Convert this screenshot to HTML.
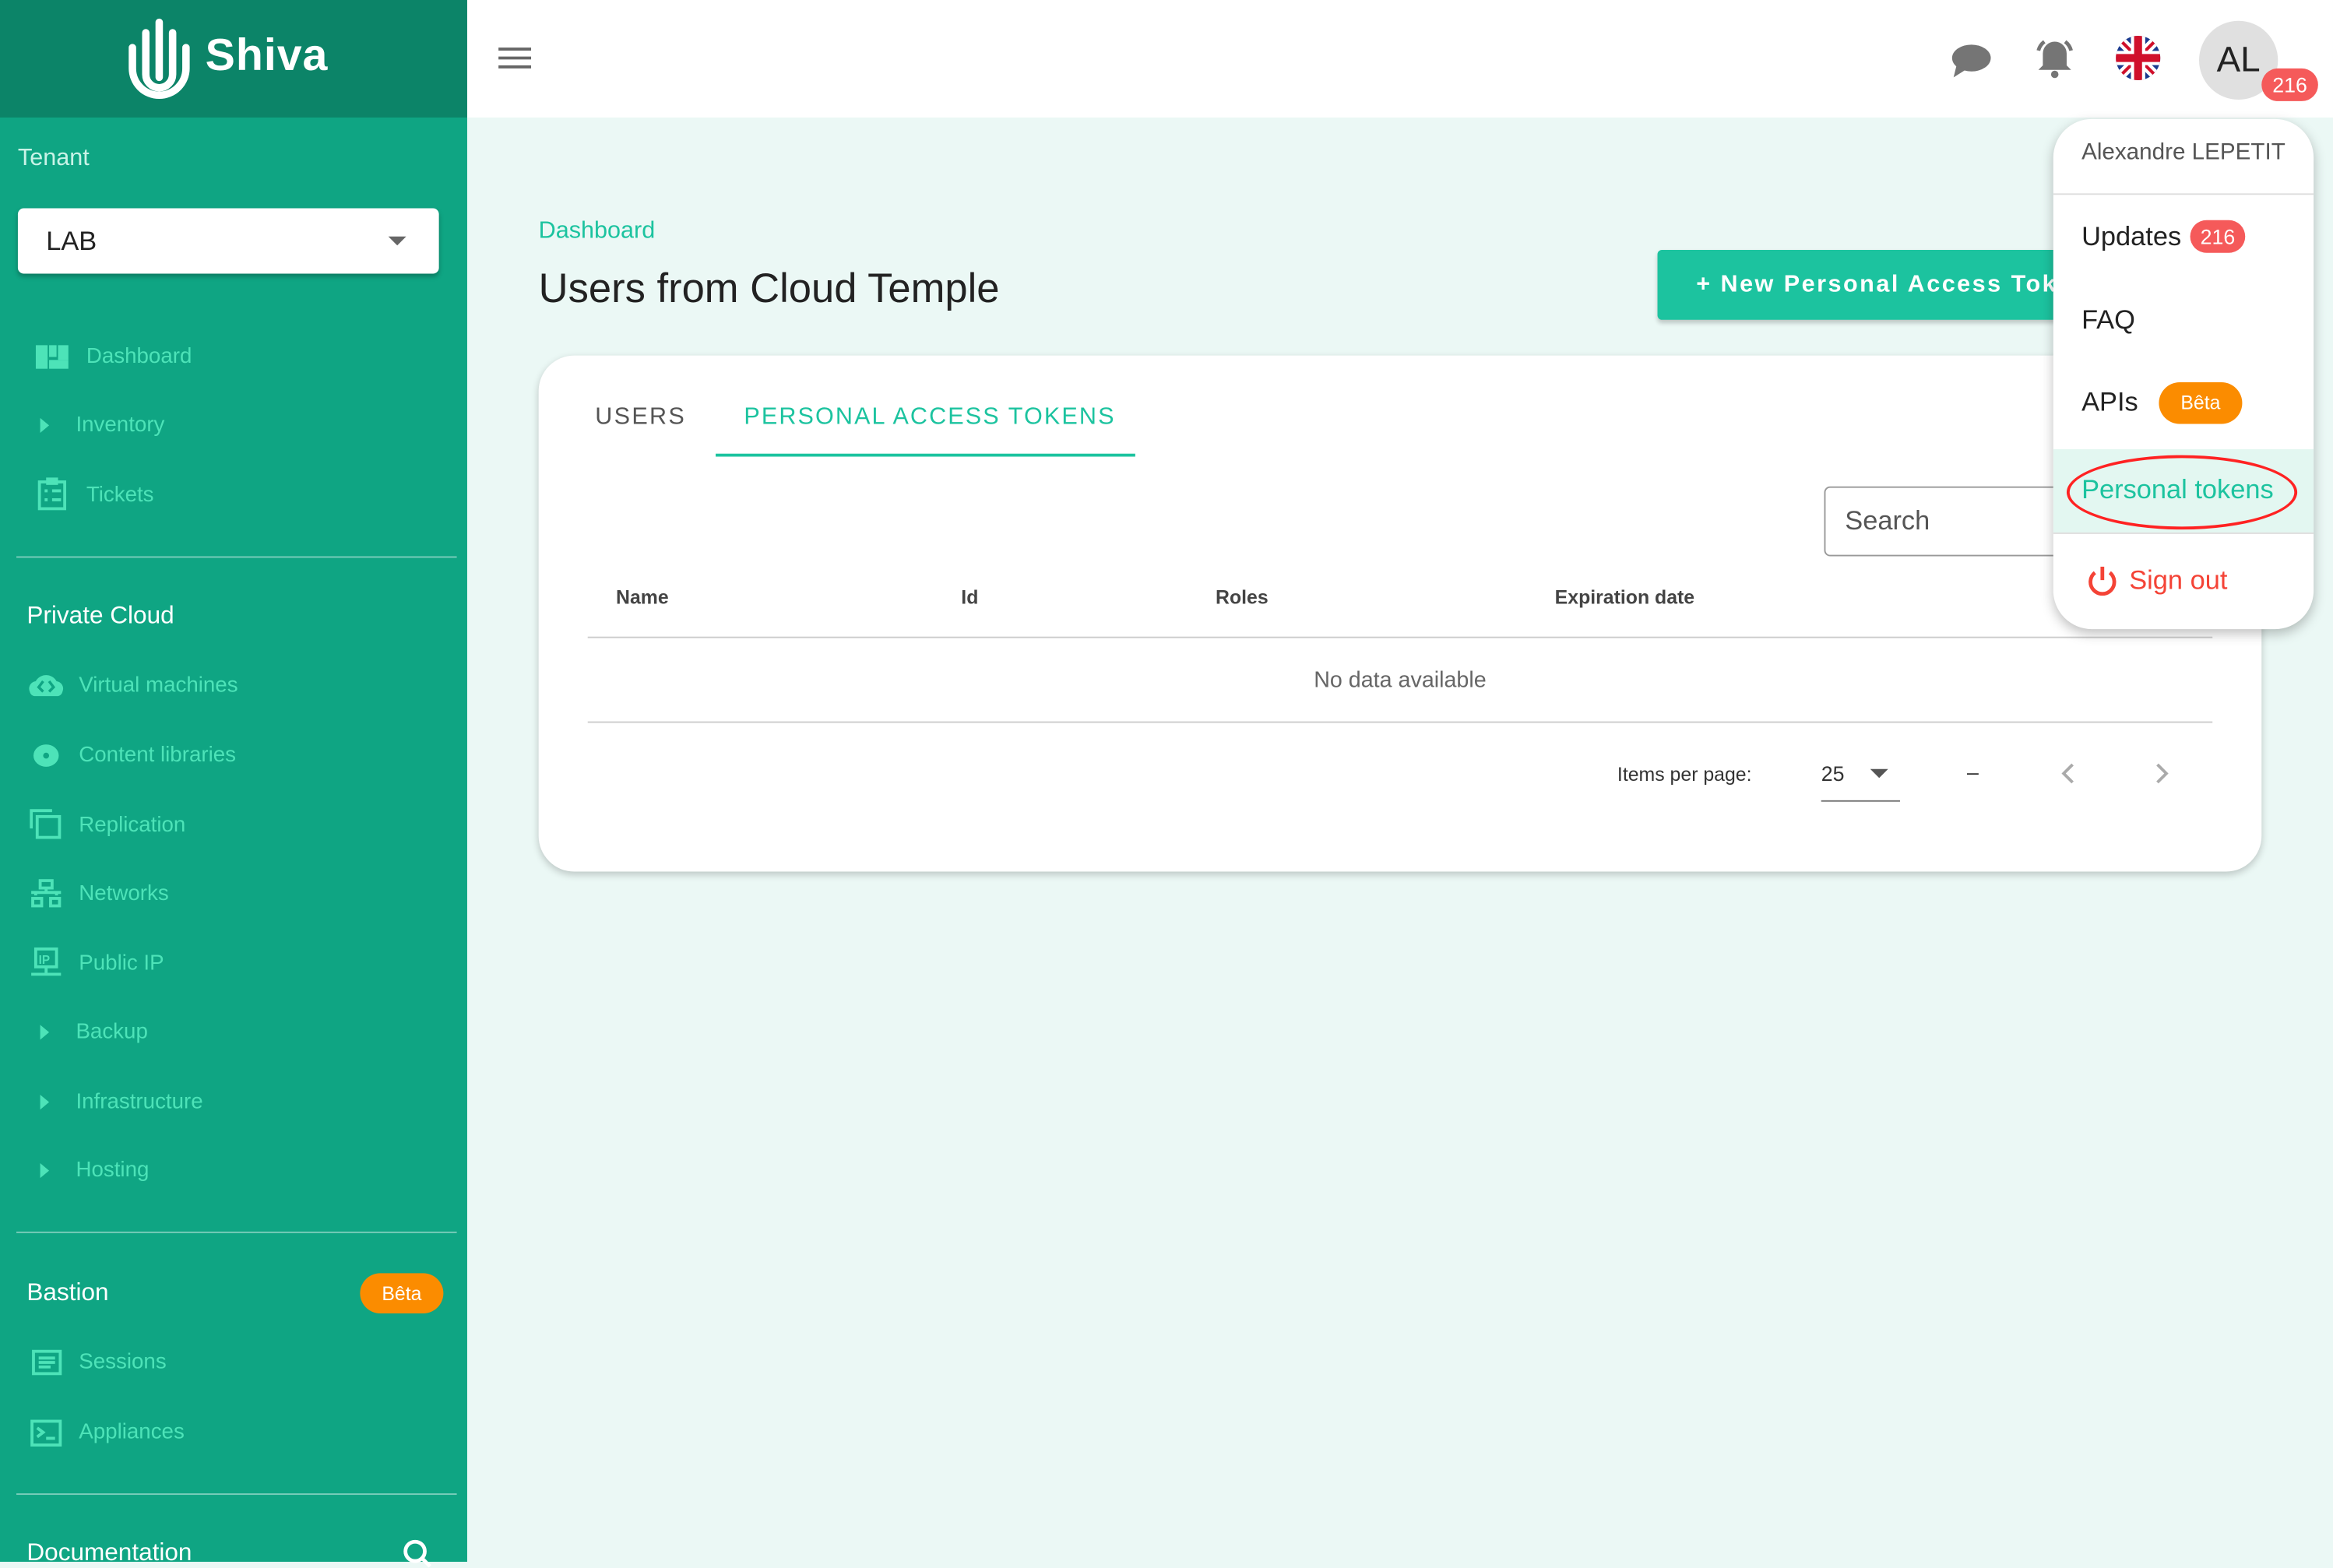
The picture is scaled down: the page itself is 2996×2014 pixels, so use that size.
<!DOCTYPE html>
<html><head><meta charset="utf-8"><style>
*{box-sizing:border-box;margin:0;padding:0}
html,body{width:2996px;height:2006px;overflow:hidden;background:#ebf8f5;font-family:"Liberation Sans",sans-serif}
#s{position:absolute;left:0;top:0;width:1568px;height:1050px;transform:scale(1.9107,1.9105);transform-origin:0 0;background:#ebf8f5}
.a{position:absolute}
.side{left:0;top:0;width:314px;height:1050px;background:#0fa583}
.hdr{left:0;top:0;width:314px;height:79px;background:#0c8468}
.mi{position:absolute;left:0;color:#4de3b8;font-size:14.5px;height:20px;width:300px}
.mi svg{position:absolute}
.mi span{position:absolute;top:0;line-height:20px;white-space:nowrap}
.sec{position:absolute;left:18px;color:#fff;font-size:16.5px}
.hr{position:absolute;left:11px;width:296px;height:1px;background:rgba(255,255,255,.45)}
.beta{background:#fb8c00;color:#fff;border-radius:14px;font-size:13px;text-align:center}
.tri{position:absolute;left:27px;top:5px;border-top:5px solid transparent;border-bottom:5px solid transparent;border-left:6px solid #4de3b8}
</style></head><body><div id="s">
<div class="a side"></div>
<div class="a hdr"></div>
<svg class="a" style="left:85px;top:10px" width="46" height="58" viewBox="0 0 46 58"><g fill="none" stroke="#fff" stroke-width="5" stroke-linecap="round"><path d="M22 5V42"/><path d="M31 12V40a9 9 0 0 1-18 0V12"/><path d="M40 22V36a18 18 0 0 1-36 0V22"/></g></svg>
<div class="a" style="left:138px;top:21px;color:#fff;font-size:30px;font-weight:bold;letter-spacing:0.5px">Shiva</div>
<div class="a" style="left:12px;top:98px;color:#c9f3e7;font-size:16px">Tenant</div>
<div class="a" style="left:12px;top:140px;width:283px;height:44px;background:#fff;border-radius:4px;box-shadow:0 2px 3px rgba(0,0,0,.25)"></div>
<div class="a" style="left:31px;top:152px;font-size:18px;color:#222">LAB</div>
<div class="a" style="left:261px;top:159px;border-left:6px solid transparent;border-right:6px solid transparent;border-top:6px solid #666"></div>

<div class="mi" style="top:230px"><svg style="left:24px;top:2px" width="22" height="16"><rect x="0" y="0" width="8" height="16" fill="#4de3b8"/><rect x="9" y="0" width="5" height="8" fill="#4de3b8"/><rect x="15" y="0" width="7" height="10" fill="#4de3b8"/><rect x="9" y="10" width="13" height="6" fill="#4de3b8"/></svg><span style="left:58px">Dashboard</span></div>
<div class="mi" style="top:276px"><div class="tri"></div><span style="left:51px">Inventory</span></div>
<div class="mi" style="top:323px"><svg style="left:25px;top:-2px" width="22" height="24"><rect x="1.5" y="3" width="17" height="18" fill="none" stroke="#4de3b8" stroke-width="2"/><rect x="6" y="0" width="8" height="5" fill="#4de3b8"/><path d="M5 9h2M5 15h2M10 9h6M10 15h6" stroke="#4de3b8" stroke-width="2"/></svg><span style="left:58px">Tickets</span></div>
<div class="hr" style="top:374px"></div>
<div class="sec" style="top:405px">Private Cloud</div>
<div class="mi" style="top:451px"><svg style="left:18px;top:1px" width="26" height="18"><path d="M2 13a5 5 0 0 1 4-7a8 8 0 0 1 14 0a5 5 0 0 1 4 7a4 4 0 0 1-3 3H5a4 4 0 0 1-3-3z" fill="#4de3b8"/><path d="M11 6l-3 4 3 3M15 6l3 4-3 3" stroke="#0fa583" stroke-width="1.8" fill="none"/></svg><span style="left:53px">Virtual machines</span></div>
<div class="mi" style="top:498px"><svg style="left:22px;top:2px" width="18" height="16"><ellipse cx="9" cy="8" rx="8.5" ry="7.5" fill="#4de3b8"/><circle cx="9" cy="8" r="2" fill="#0fa583"/></svg><span style="left:53px">Content libraries</span></div>
<div class="mi" style="top:545px"><svg style="left:20px;top:-2px" width="22" height="22"><path d="M1 14V2h14" fill="none" stroke="#4de3b8" stroke-width="2"/><rect x="5" y="6" width="15" height="14" fill="none" stroke="#4de3b8" stroke-width="2"/></svg><span style="left:53px">Replication</span></div>
<div class="mi" style="top:591px"><svg style="left:20px;top:0" width="22" height="20"><g fill="none" stroke="#4de3b8" stroke-width="2"><rect x="7" y="1" width="8" height="5"/><path d="M11 6v3M4 11V9h14v2M1 9h20"/><rect x="2" y="13" width="6" height="5"/><rect x="14" y="13" width="6" height="5"/></g></svg><span style="left:53px">Networks</span></div>
<div class="mi" style="top:638px"><svg style="left:20px;top:-1px" width="22" height="22"><g fill="none" stroke="#4de3b8" stroke-width="2"><rect x="4" y="1" width="14" height="12"/><path d="M11 13v4M1 18h20"/></g><text x="6" y="11" font-size="8" font-weight="bold" fill="#4de3b8" font-family="Liberation Sans">IP</text></svg><span style="left:53px">Public IP</span></div>
<div class="mi" style="top:684px"><div class="tri"></div><span style="left:51px">Backup</span></div>
<div class="mi" style="top:731px"><div class="tri"></div><span style="left:51px">Infrastructure</span></div>
<div class="mi" style="top:777px"><div class="tri"></div><span style="left:51px">Hosting</span></div>
<div class="hr" style="top:828px"></div>
<div class="sec" style="top:860px">Bastion</div>
<div class="a beta" style="left:242px;top:856px;width:56px;height:27px;line-height:27px">Bêta</div>
<div class="mi" style="top:906px"><svg style="left:21px;top:1px" width="22" height="20"><g fill="none" stroke="#4de3b8" stroke-width="2"><rect x="1.5" y="1.5" width="18" height="15"/><path d="M5 6h11M5 9h11M5 12h8"/></g></svg><span style="left:53px">Sessions</span></div>
<div class="mi" style="top:953px"><svg style="left:20px;top:1px" width="22" height="20"><g fill="none" stroke="#4de3b8" stroke-width="2"><rect x="1.5" y="1.5" width="19" height="16"/><path d="M5 6l4 3-4 3M11 13h6"/></g></svg><span style="left:53px">Appliances</span></div>
<div class="hr" style="top:1004px"></div>
<div class="sec" style="top:1035px">Documentation</div>
<svg class="a" style="left:270px;top:1034px" width="20" height="20"><circle cx="9" cy="9" r="6.5" fill="none" stroke="#fff" stroke-width="2.5"/><path d="M14 14l5 5" stroke="#fff" stroke-width="2.5"/></svg>

<div class="a" style="left:314px;top:0;width:1254px;height:79px;background:#fff"></div>
<svg class="a" style="left:335px;top:31px" width="22" height="16"><path d="M0 2h22M0 8h22M0 14h22" stroke="#666" stroke-width="2"/></svg>
<svg class="a" style="left:1311px;top:27px" width="28" height="26"><ellipse cx="14" cy="12" rx="13" ry="9" fill="#757575"/><path d="M4 17l-2 8 8-5z" fill="#757575"/></svg>
<svg class="a" style="left:1366px;top:24px" width="30" height="30"><path d="M15 4a8 8 0 0 0-8 8v8l-3 3h22l-3-3v-8a8 8 0 0 0-8-8z" fill="#757575"/><circle cx="15" cy="26" r="2.5" fill="#757575"/><path d="M4 10a11 11 0 0 1 4-6M26 10a11 11 0 0 0-4-6" stroke="#757575" stroke-width="2.5" fill="none"/></svg>
<svg class="a" style="left:1421px;top:23px" width="32" height="32" viewBox="0 0 60 60"><defs><clipPath id="c"><circle cx="30" cy="30" r="28"/></clipPath></defs><g clip-path="url(#c)"><rect width="60" height="60" fill="#1a3a8f"/><path d="M0 0L60 60M60 0L0 60" stroke="#fff" stroke-width="12"/><path d="M0 0L60 60M60 0L0 60" stroke="#d0102b" stroke-width="4"/><path d="M30 0v60M0 30h60" stroke="#fff" stroke-width="18"/><path d="M30 0v60M0 30h60" stroke="#d0102b" stroke-width="10"/></g></svg>
<div class="a" style="left:1478px;top:14px;width:53px;height:53px;border-radius:50%;background:#e0e0e0;color:#222;font-size:24px;text-align:center;line-height:53px">AL</div>
<div class="a" style="left:1520px;top:46px;width:38px;height:22px;border-radius:11px;background:#f55a5a;color:#fff;font-size:14px;text-align:center;line-height:22px">216</div>

<div class="a" style="left:362px;top:147px;color:#1cc39f;font-size:16px">Dashboard</div>
<div class="a" style="left:362px;top:178px;color:#222;font-size:27.5px">Users from Cloud Temple</div>
<div class="a" style="left:1114px;top:168px;width:300px;height:47px;background:#1cc39f;border-radius:3px;box-shadow:0 2px 3px rgba(0,0,0,.2);color:#fff;font-size:16px;font-weight:bold;letter-spacing:1.3px;line-height:47px;padding-left:26px;white-space:nowrap;overflow:hidden">+ New Personal Access Token</div>
<div class="a" style="left:362px;top:239px;width:1158px;height:347px;background:#fff;border-radius:24px;box-shadow:0 2px 5px rgba(0,0,0,.2)"></div>
<div class="a" style="left:400px;top:272px;color:#555;font-size:16px;letter-spacing:1.2px">USERS</div>
<div class="a" style="left:500px;top:272px;color:#1cc39f;font-size:16px;letter-spacing:1.1px">PERSONAL ACCESS TOKENS</div>
<div class="a" style="left:481px;top:305px;width:282px;height:2px;background:#1cc39f"></div>
<div class="a" style="left:1226px;top:327px;width:200px;height:47px;border:1px solid #999;border-radius:4px;color:#555;font-size:18px;line-height:45px;padding-left:13px">Search</div>
<div class="a" style="left:414px;top:394px;font-size:13px;font-weight:bold;color:#444">Name</div>
<div class="a" style="left:646px;top:394px;font-size:13px;font-weight:bold;color:#444">Id</div>
<div class="a" style="left:817px;top:394px;font-size:13px;font-weight:bold;color:#444">Roles</div>
<div class="a" style="left:1045px;top:394px;font-size:13px;font-weight:bold;color:#444">Expiration date</div>
<div class="a" style="left:395px;top:428px;width:1092px;height:1px;background:#ccc"></div>
<div class="a" style="left:395px;top:449px;width:1092px;text-align:center;font-size:15px;color:#666">No data available</div>
<div class="a" style="left:395px;top:485px;width:1092px;height:1px;background:#ccc"></div>
<div class="a" style="left:1087px;top:513px;font-size:13px;color:#333">Items per page:</div>
<div class="a" style="left:1224px;top:512px;font-size:14px;color:#333">25</div>
<div class="a" style="left:1257px;top:517px;border-left:6px solid transparent;border-right:6px solid transparent;border-top:6px solid #555"></div>
<div class="a" style="left:1224px;top:538px;width:53px;height:1px;background:#777"></div>
<div class="a" style="left:1322px;top:511px;font-size:14px;color:#333">–</div>
<svg class="a" style="left:1385px;top:512px" width="10" height="16"><path d="M8 2L2 8l6 6" fill="none" stroke="#aaa" stroke-width="2"/></svg>
<svg class="a" style="left:1448px;top:512px" width="10" height="16"><path d="M2 2l6 6-6 6" fill="none" stroke="#aaa" stroke-width="2"/></svg>

<div class="a" style="left:1380px;top:80px;width:175px;height:343px;background:#fff;border-radius:26px;box-shadow:0 3px 8px rgba(0,0,0,.25);overflow:hidden">
<div class="a" style="left:19px;top:14px;font-size:15.5px;color:#555;white-space:nowrap">Alexandre LEPETIT</div>
<div class="a" style="left:0;top:50px;width:175px;height:1px;background:#ddd"></div>
<div class="a" style="left:19px;top:69px;font-size:18px;color:#222">Updates</div>
<div class="a" style="left:92px;top:68px;width:37px;height:22px;border-radius:11px;background:#f55a5a;color:#fff;font-size:14px;text-align:center;line-height:22px">216</div>
<div class="a" style="left:19px;top:125px;font-size:18px;color:#222">FAQ</div>
<div class="a" style="left:19px;top:180px;font-size:18px;color:#222">APIs</div>
<div class="a beta" style="left:71px;top:177px;width:56px;height:28px;line-height:28px">Bêta</div>
<div class="a" style="left:0;top:222px;width:175px;height:56px;background:#e3f7f1"></div>
<div class="a" style="left:19px;top:239px;font-size:18px;color:#1cc39f;white-space:nowrap">Personal tokens</div>
<div class="a" style="left:9px;top:226px;width:155px;height:50px;border:2px solid #f22;border-radius:50%"></div>
<div class="a" style="left:0;top:278px;width:175px;height:1px;background:#ddd"></div>
<svg class="a" style="left:22px;top:300px" width="22" height="22"><path d="M6 5a8 8 0 1 0 10 0" fill="none" stroke="#f44336" stroke-width="2.5"/><path d="M11 1v9" stroke="#f44336" stroke-width="2.5"/></svg>
<div class="a" style="left:51px;top:300px;font-size:18px;color:#f44336">Sign out</div>
</div>
</div></body></html>
